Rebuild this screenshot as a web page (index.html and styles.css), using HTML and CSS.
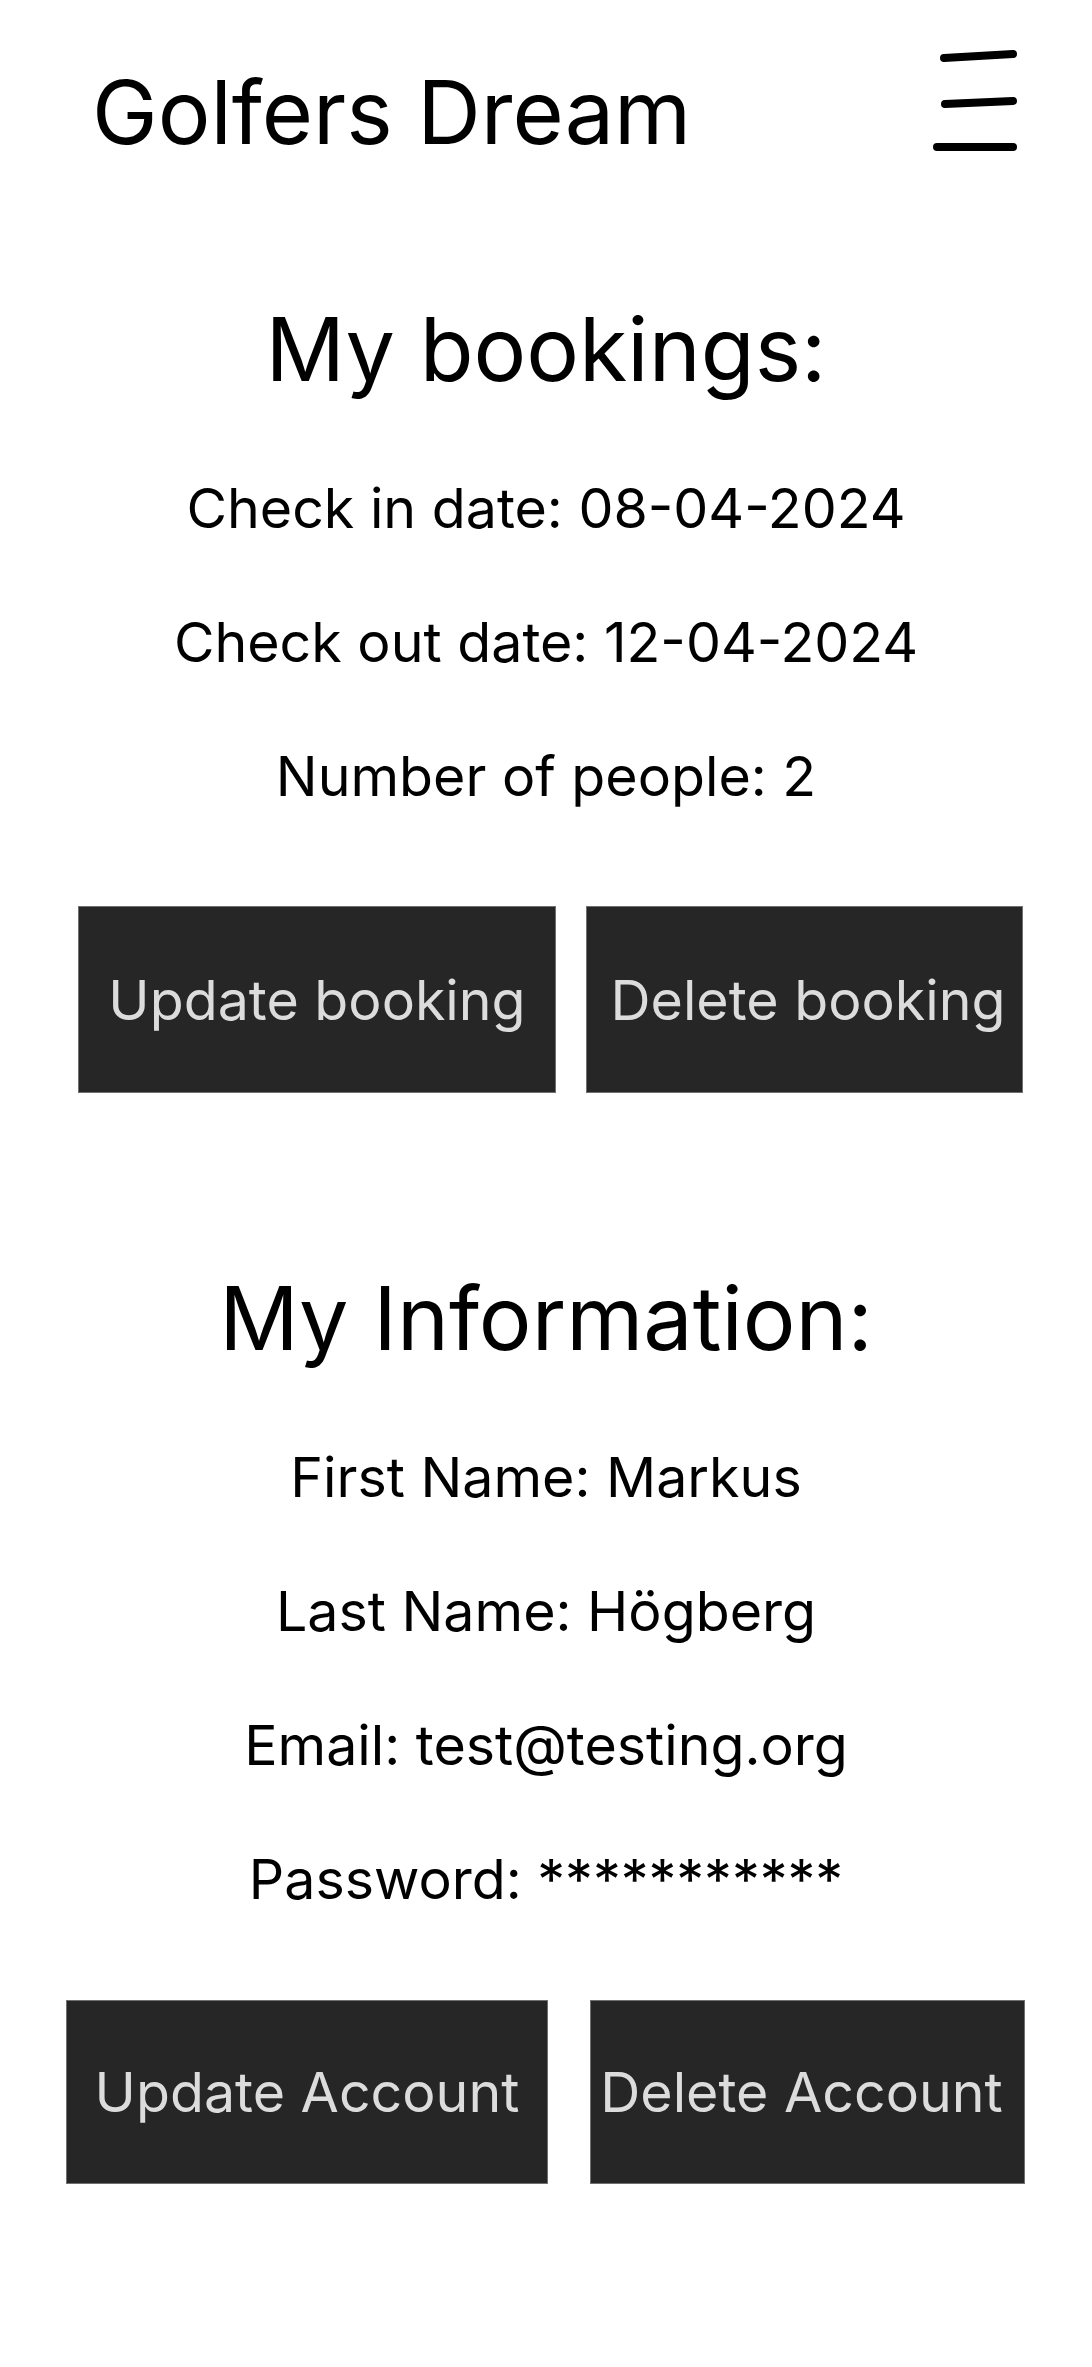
FILE: index.html
```html
<!DOCTYPE html>
<html lang="en">
<head>
<meta charset="utf-8">
<title>Golfers Dream - My page</title>
<link rel="stylesheet" href="styles.css">
</head>
<body>
<header class="site-header">
  <span class="brand">Golfers Dream</span>
  <button class="menu-btn" aria-label="Menu">
    <svg viewBox="0 0 100 110" width="100" height="110" aria-hidden="true">
      <path d="M19 13 L88 9" />
      <path d="M20 59 L88 56" />
      <path d="M12 102 L88 102" />
    </svg>
  </button>
</header>
<main>
  <section class="panel bookings">
    <h2 class="panel-title">My bookings:</h2>
    <div class="details">
      <p>Check in date: 08-04-2024</p>
      <p>Check out date: 12-04-2024</p>
      <p>Number of people: 2</p>
    </div>
    <div class="actions actions-booking">
      <button class="action action-update">Update booking</button>
      <button class="action action-delete">Delete booking</button>
    </div>
  </section>
  <section class="panel info">
    <h2 class="panel-title">My Information:</h2>
    <div class="details">
      <p>First Name: Markus</p>
      <p>Last Name: Högberg</p>
      <p>Email: test@testing.org</p>
      <p>Password: ***********</p>
    </div>
    <div class="actions actions-account">
      <button class="action action-update">Update Account</button>
      <button class="action action-delete">Delete Account</button>
    </div>
  </section>
</main>
</body>
</html>
```

FILE: styles.css
```css
* { box-sizing: border-box; }

html, body {
  margin: 0;
  background: #ffffff;
}

body {
  font-family: "Inter", "Noto Sans", "Liberation Sans", sans-serif;
  color: #000000;
  min-height: 2367px;
}

.site-header {
  display: flex;
  justify-content: space-between;
  align-items: flex-start;
  height: 167px;
  padding: 45px 67px 0 92px;
}

.brand {
  font-size: 88px;
  line-height: 110px;
  margin-top: 12px;
}

.menu-btn {
  background: none;
  border: 0;
  padding: 0;
  width: 100px;
  height: 110px;
  cursor: pointer;
}

.menu-btn svg {
  display: block;
}

.menu-btn path {
  fill: none;
  stroke: #000000;
  stroke-width: 8;
  stroke-linecap: round;
}

.panel-title {
  margin: 0;
  font-size: 88px;
  line-height: 108px;
  font-weight: 400;
  text-align: center;
}

.bookings {
  padding-top: 128px;
}

.info {
  padding-top: 171px;
}

.details {
  display: flex;
  flex-direction: column;
  gap: 66px;
  margin-top: 71px;
  text-align: center;
}

.details p {
  margin: 0;
  font-size: 55.5px;
  line-height: 68px;
}

.actions {
  display: flex;
  align-items: stretch;
}

.action {
  font-family: inherit;
  font-size: 55.5px;
  font-weight: 400;
  line-height: 68px;
  color: #dcdcdc;
  background: #262626;
  border: 1px solid #707070;
  padding: 0;
  white-space: nowrap;
  cursor: pointer;
}

.actions-booking {
  margin-top: 96px;
  padding-left: 78px;
  gap: 30px;
}

.actions-booking .action {
  height: 187px;
}

.actions-booking .action-update { width: 478px; }
.actions-booking .action-delete { width: 437px; padding-left: 7px; }

.actions-account {
  margin-top: 87px;
  padding-left: 66px;
  gap: 42px;
}

.actions-account .action {
  height: 184px;
}

.actions-account .action-update { width: 482px; }
.actions-account .action-delete { width: 435px; padding-right: 12px; }
```
